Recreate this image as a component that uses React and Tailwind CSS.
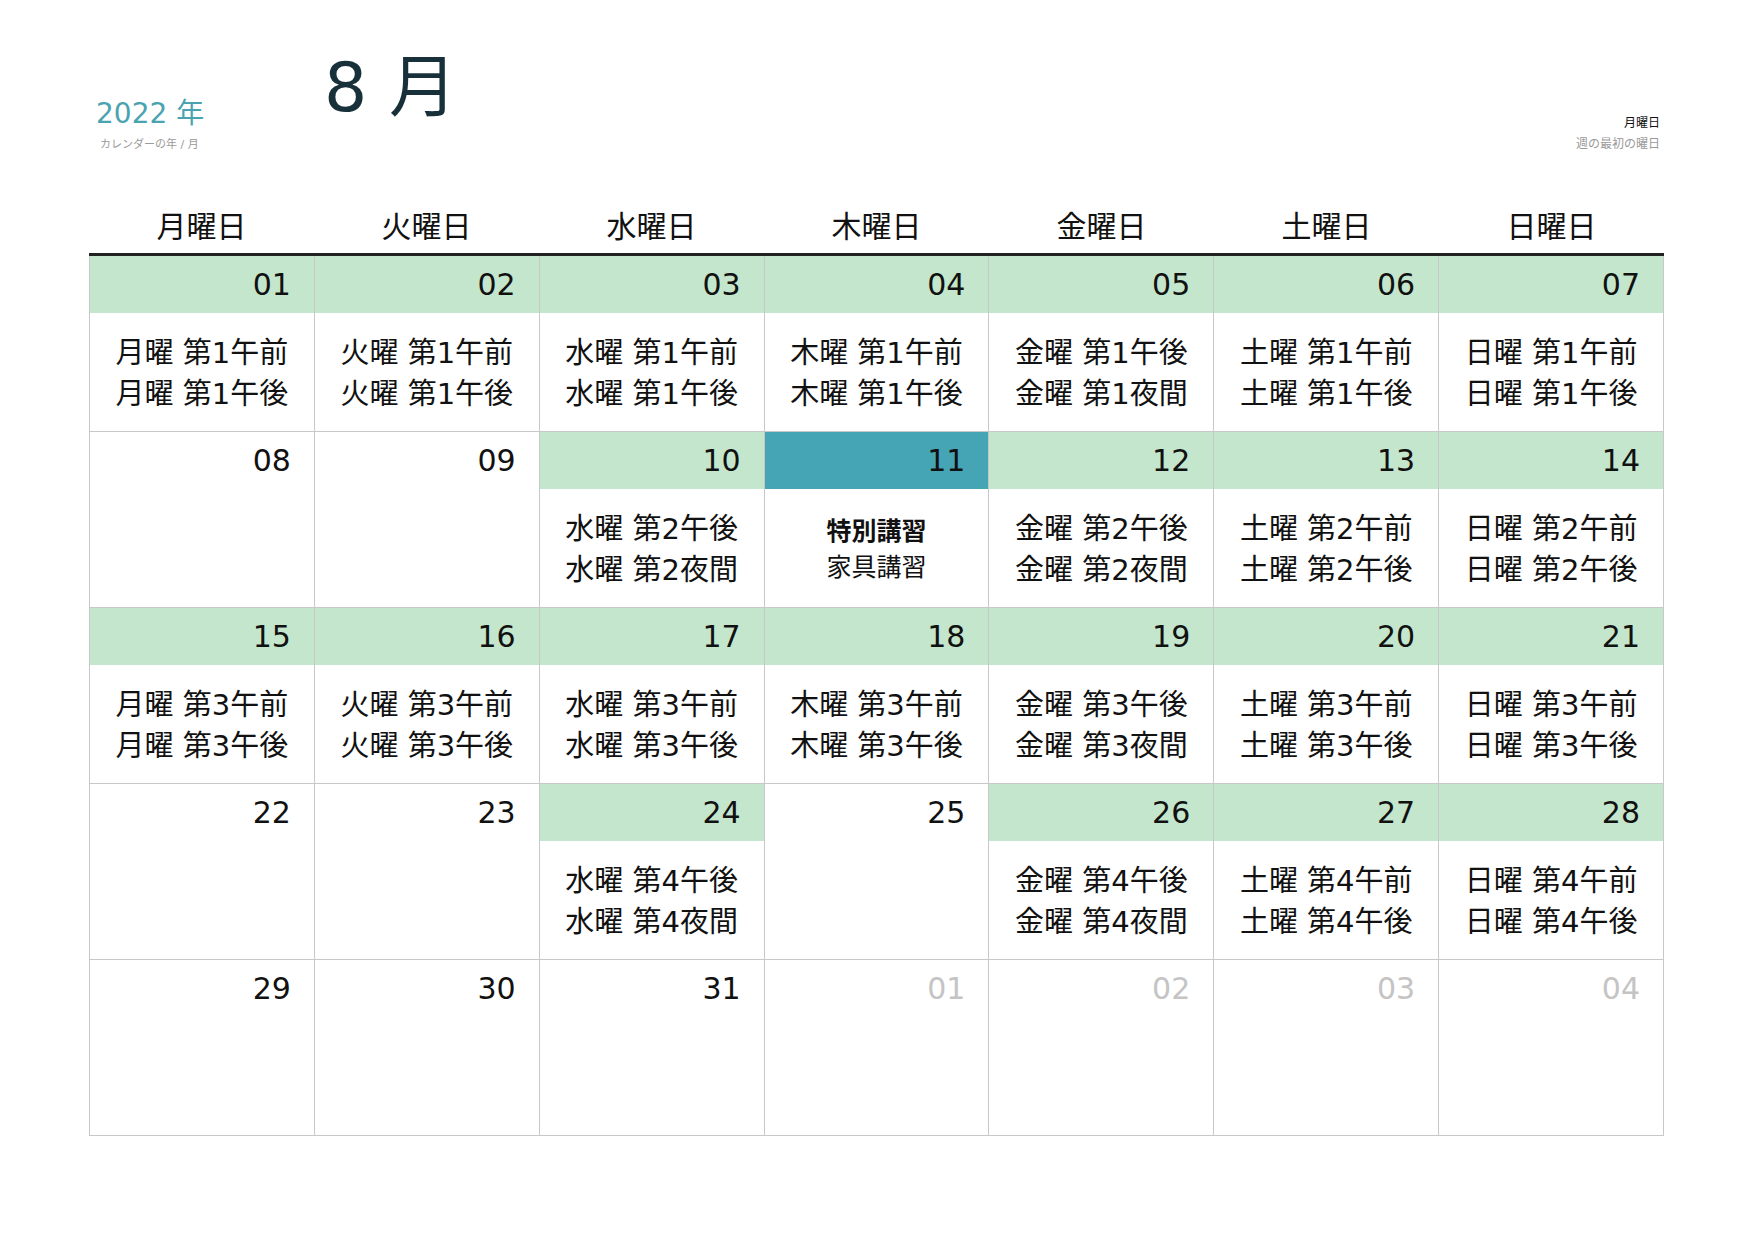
const DAYS = ['月', '火', '水', '木', '金', '土', '日'];

// slots per weekday; weeks 2 and 4 differ on Wednesday
const SLOTS = {
  月: ['午前', '午後'],
  火: ['午前', '午後'],
  水: ['午前', '午後'],
  木: ['午前', '午後'],
  金: ['午後', '夜間'],
  土: ['午前', '午後'],
  日: ['午前', '午後'],
};

const classes = (day, n, slots = SLOTS[day]) => slots.map((s) => `${day}曜 第${n}${s}`);

const full = (n) => DAYS.map((day) => ({ band: 'green', ev: classes(day, n) }));

const weeks = [
  full(1).map((c, i) => ({ ...c, d: `0${i + 1}` })),
  [
    { d: '08' },
    { d: '09' },
    { d: '10', band: 'green', ev: classes('水', 2, ['午後', '夜間']) },
    { d: '11', band: 'teal', special: true },
    { d: '12', band: 'green', ev: classes('金', 2) },
    { d: '13', band: 'green', ev: classes('土', 2) },
    { d: '14', band: 'green', ev: classes('日', 2) },
  ],
  full(3).map((c, i) => ({ ...c, d: `${15 + i}` })),
  [
    { d: '22' },
    { d: '23' },
    { d: '24', band: 'green', ev: classes('水', 4, ['午後', '夜間']) },
    { d: '25' },
    { d: '26', band: 'green', ev: classes('金', 4) },
    { d: '27', band: 'green', ev: classes('土', 4) },
    { d: '28', band: 'green', ev: classes('日', 4) },
  ],
  [
    { d: '29' },
    { d: '30' },
    { d: '31' },
    { d: '01', dim: true },
    { d: '02', dim: true },
    { d: '03', dim: true },
    { d: '04', dim: true },
  ],
];

const Cell = ({ cell }) => {
  const bandCls =
    cell.band === 'green' ? 'bg-[#c4e6cc]' : cell.band === 'teal' ? 'bg-[#46a5b5]' : 'bg-white';
  return (
    <div className="h-[176px] border-r border-b border-[#c8c8c8] flex flex-col">
      <div className={`h-[57px] flex items-center justify-end pr-[23px] ${bandCls}`}>
        <span className={`text-[30px] leading-none ${cell.dim ? 'text-[#c4c4c4]' : 'text-[#111]'}`}>{cell.d}</span>
      </div>
      <div className="flex-1 pt-[4px] flex flex-col items-center justify-center text-[#111]">
        {cell.special ? (
          <>
            <span className="text-[25px] leading-[36px] font-bold">特別講習</span>
            <span className="text-[25px] leading-[36px]">家具講習</span>
          </>
        ) : (
          cell.ev &&
          cell.ev.map((t) => (
            <span key={t} className="text-[29px] leading-[41px] whitespace-pre">
              {t}
            </span>
          ))
        )}
      </div>
    </div>
  );
};

export default function App() {
  return (
    <div className="w-[1755px] h-[1241px] bg-white pl-[89px] pr-[91px] font-['DejaVu_Sans','Noto_Sans_CJK_JP',sans-serif]">
      {/* Header */}
      <div className="h-[165px] flex items-start">
        <div className="w-[235px] pl-[7px] pt-[100px]">
          <div className="text-[28px] leading-none text-[#4aa3b0]">2022 年</div>
          <div className="mt-[11px] ml-[4px] text-[11px] leading-none text-[#9a9a9a]">カレンダーの年 / 月</div>
        </div>
        <div className="pt-[54px] text-[68px] leading-none text-[#17303a]">8 月</div>
        <div className="ml-auto pr-[4px] pt-[116px] text-right">
          <div className="text-[12px] leading-[14px] text-[#111]">月曜日</div>
          <div className="mt-[7px] text-[12px] leading-[14px] text-[#9a9a9a]">週の最初の曜日</div>
        </div>
      </div>

      {/* Weekday names */}
      <div className="grid grid-cols-7 h-[88px]">
        {DAYS.map((d) => (
          <div key={d} className="flex items-end justify-center pb-[11px] text-[30px] leading-none text-[#111]">
            {d}曜日
          </div>
        ))}
      </div>
      <div className="h-[3px] bg-[#222]" />

      {/* Calendar grid */}
      <div className="grid grid-cols-7 border-l border-[#c8c8c8]">
        {weeks.flat().map((cell, i) => (
          <Cell key={i} cell={cell} />
        ))}
      </div>
    </div>
  );
}
